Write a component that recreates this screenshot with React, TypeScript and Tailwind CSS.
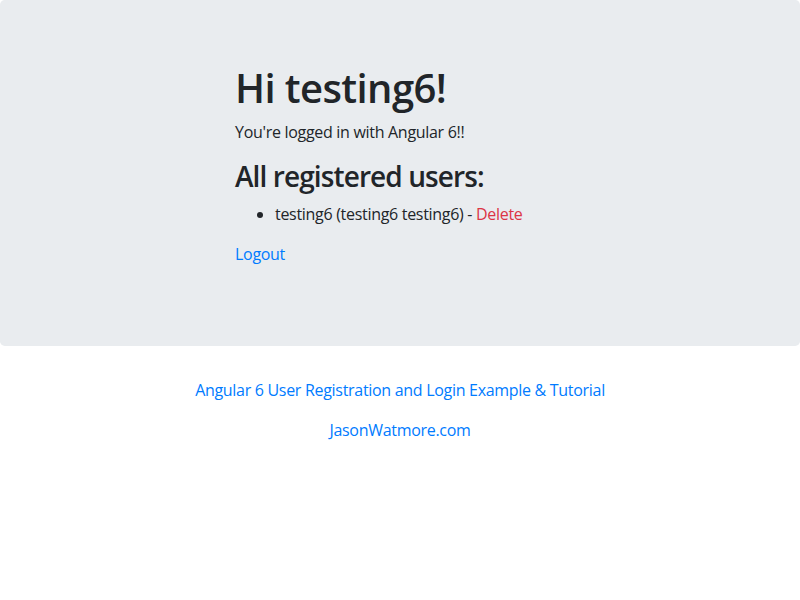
export default function App() {
  return (
    <div className="font-['Open_Sans',sans-serif] text-[16px] leading-[1.5] tracking-[-0.3px] text-[#212529]">
      <div className="mb-8 rounded-[0.3rem] bg-[#e9ecef] px-8 py-16">
        <div className="mx-auto max-w-[720px] px-[15px]">
          <div className="-mx-[15px] flex">
            <div className="ml-[25%] w-1/2 px-[15px]">
              <h1 className="mb-2 text-[40px] font-semibold leading-[1.2] tracking-[-0.6px]">Hi testing6!</h1>
              <p className="mb-4">You're logged in with Angular 6!!</p>
              <h3 className="mb-2 text-[28px] font-semibold leading-[1.2] tracking-[-0.9px]">All registered users:</h3>
              <ul className="mb-4 list-disc pl-10">
                <li>
                  testing6 (testing6 testing6) -{" "}
                  <a href="#" className="text-[#dc3545]">Delete</a>
                </li>
              </ul>
              <p className="mb-4">
                <a href="#" className="text-[#007bff]">Logout</a>
              </p>
            </div>
          </div>
        </div>
      </div>
      <div className="text-center">
        <p className="mb-4">
          <a href="#" className="text-[#007bff]">Angular 6 User Registration and Login Example &amp; Tutorial</a>
        </p>
        <p className="mb-4">
          <a href="#" className="text-[#007bff]">JasonWatmore.com</a>
        </p>
      </div>
    </div>
  );
}
